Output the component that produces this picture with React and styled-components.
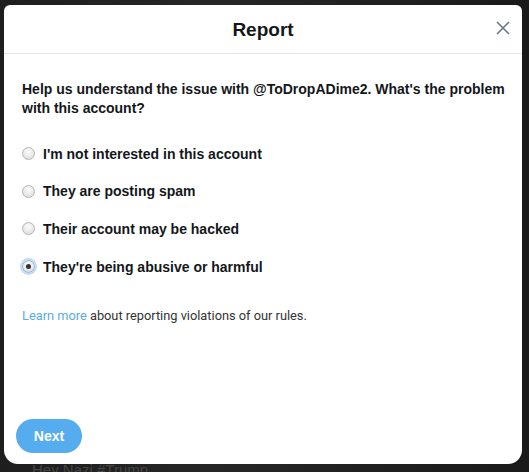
import React, { useState } from 'react';
import styled, { createGlobalStyle } from 'styled-components';

const GlobalStyle = createGlobalStyle`
  html, body {
    margin: 0;
    padding: 0;
    background: #1b1b1b;
    font-family: "Liberation Sans", Arial, sans-serif;
  }
`;

const options = [
  "I'm not interested in this account",
  'They are posting spam',
  'Their account may be hacked',
  "They're being abusive or harmful",
];

export default function App() {
  const [selected, setSelected] = useState(3);
  return (
    <>
      <GlobalStyle />
      <Backdrop>
        <Modal>
          <Header>
            <Title>Report</Title>
            <CloseButton aria-label="Close">
              <svg width="14" height="14" viewBox="0 0 14 14">
                <path d="M1 1 L13 13 M13 1 L1 13" stroke="#687886" strokeWidth="1.6" fill="none" />
              </svg>
            </CloseButton>
          </Header>
          <Body>
            <Question>
              Help us understand the issue with @ToDropADime2. What's the problem
              with this account?
            </Question>
            <Options>
              {options.map((label, i) => (
                <Option key={label} onClick={() => setSelected(i)}>
                  <Radio checked={selected === i} />
                  <span>{label}</span>
                </Option>
              ))}
            </Options>
            <Note>
              <Link href="#">Learn more</Link> about reporting violations of our rules.
            </Note>
          </Body>
          <Footer>
            <NextButton>Next</NextButton>
          </Footer>
        </Modal>
        <BehindText>Hey Nazi #Trump</BehindText>
      </Backdrop>
    </>
  );
}

const Backdrop = styled.div`
  position: relative;
  width: 529px;
  height: 472px;
  overflow: hidden;
  padding: 5px 0 0 4px;
  box-sizing: border-box;
  background: linear-gradient(90deg, #1e1e1e 0%, #262626 40%, #1a1a1a 100%);
`;

const Modal = styled.div`
  position: relative;
  z-index: 1;
  width: 518px;
  height: 459px;
  background: #fff;
  border-radius: 6px 6px 14px 14px;
  display: flex;
  flex-direction: column;
`;

const Header = styled.div`
  height: 48px;
  border-bottom: 1px solid #e1e8ed;
  display: flex;
  align-items: center;
  justify-content: center;
  position: relative;
  flex-shrink: 0;
`;

const Title = styled.h1`
  margin: 0;
  font-size: 19px;
  font-weight: 700;
  color: #14171a;
  padding-top: 2px;
`;

const CloseButton = styled.button`
  position: absolute;
  right: 12px;
  top: 16px;
  border: none;
  background: none;
  padding: 0;
  width: 14px;
  height: 14px;
  display: flex;
  cursor: pointer;
`;

const Body = styled.div`
  flex: 1;
  padding: 26px 8px 0 18px;
  display: flex;
  flex-direction: column;
`;

const Question = styled.p`
  margin: 0;
  font-size: 14px;
  line-height: 19px;
  font-weight: 700;
  color: #14171a;
`;

const Options = styled.div`
  display: flex;
  flex-direction: column;
  gap: 18.7px;
  margin-top: 26px;
`;

const Option = styled.label`
  display: flex;
  align-items: center;
  gap: 8px;
  height: 19px;
  font-size: 14px;
  font-weight: 700;
  color: #14171a;
  cursor: pointer;
`;

const Radio = styled.span`
  width: 13px;
  height: 13px;
  box-sizing: border-box;
  border-radius: 50%;
  border: 1px solid #b5b5b5;
  background: radial-gradient(circle at 50% 35%, #fdfdfd 0%, #e6e6e6 60%, #d8d8d8 100%);
  position: relative;
  flex-shrink: 0;
  ${({ checked }) =>
    checked &&
    `
    outline: 2px solid #c3dcf5;
    outline-offset: 0px;
    border-color: #8aa9c9;
    &::after {
      content: '';
      position: absolute;
      left: 3px;
      top: 3px;
      width: 5px;
      height: 5px;
      border-radius: 50%;
      background: #333;
    }
  `}
`;

const Note = styled.p`
  margin: 32px 0 0 0;
  font-size: 12.8px;
  line-height: 15px;
  color: #333;
  font-family: Roboto, "Liberation Sans", Arial, sans-serif;
`;

const Link = styled.a`
  color: #5aabe0;
  text-decoration: none;
`;

const Footer = styled.div`
  padding: 0 0 11px 12px;
`;

const NextButton = styled.button`
  width: 66px;
  height: 34px;
  border: none;
  border-radius: 17px;
  background: #55acee;
  color: #fff;
  font-family: "Liberation Sans", Arial, sans-serif;
  font-weight: 700;
  font-size: 14px;
  cursor: pointer;
`;

const BehindText = styled.div`
  position: absolute;
  left: 32px;
  top: 461px;
  font-size: 15px;
  color: #444;
`;
